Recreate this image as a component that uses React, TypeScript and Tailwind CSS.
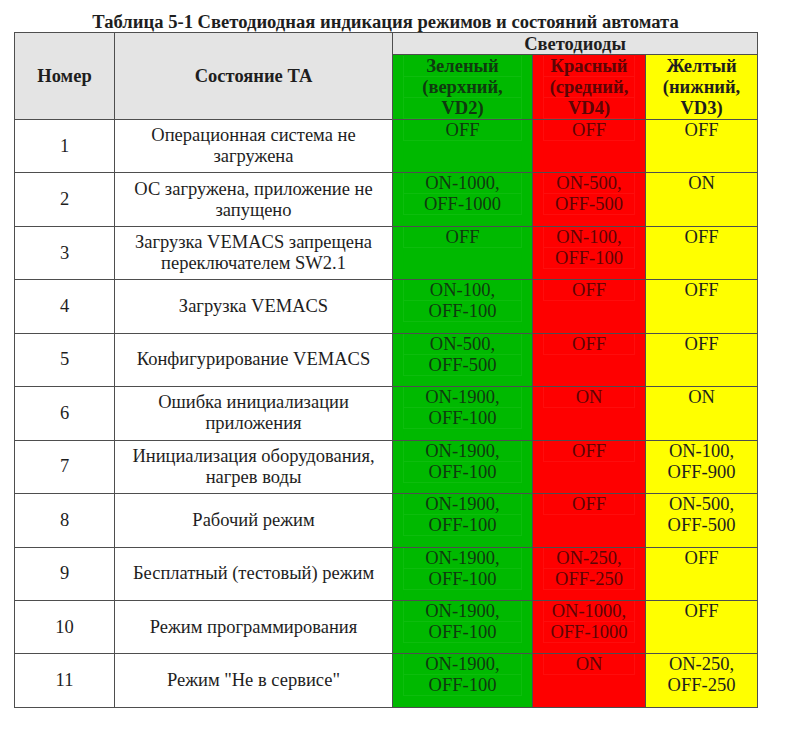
const rows: { n: string; state: string[]; g: string[]; r: string[]; y: string[] }[] = [
  { n: "1", state: ["Операционная система не", "загружена"], g: ["OFF"], r: ["OFF"], y: ["OFF"] },
  { n: "2", state: ["ОС загружена, приложение не", "запущено"], g: ["ON-1000,", "OFF-1000"], r: ["ON-500,", "OFF-500"], y: ["ON"] },
  { n: "3", state: ["Загрузка VEMACS запрещена", "переключателем SW2.1"], g: ["OFF"], r: ["ON-100,", "OFF-100"], y: ["OFF"] },
  { n: "4", state: ["Загрузка VEMACS"], g: ["ON-100,", "OFF-100"], r: ["OFF"], y: ["OFF"] },
  { n: "5", state: ["Конфигурирование VEMACS"], g: ["ON-500,", "OFF-500"], r: ["OFF"], y: ["OFF"] },
  { n: "6", state: ["Ошибка инициализации", "приложения"], g: ["ON-1900,", "OFF-100"], r: ["ON"], y: ["ON"] },
  { n: "7", state: ["Инициализация оборудования,", "нагрев воды"], g: ["ON-1900,", "OFF-100"], r: ["OFF"], y: ["ON-100,", "OFF-900"] },
  { n: "8", state: ["Рабочий режим"], g: ["ON-1900,", "OFF-100"], r: ["OFF"], y: ["ON-500,", "OFF-500"] },
  { n: "9", state: ["Бесплатный (тестовый) режим"], g: ["ON-1900,", "OFF-100"], r: ["ON-250,", "OFF-250"], y: ["OFF"] },
  { n: "10", state: ["Режим программирования"], g: ["ON-1900,", "OFF-100"], r: ["ON-1000,", "OFF-1000"], y: ["OFF"] },
  { n: "11", state: ['Режим "Не в сервисе"'], g: ["ON-1900,", "OFF-100"], r: ["ON"], y: ["ON-250,", "OFF-250"] },
]

// faint inner boxes around each line, as in the scanned original
function Lines({ lines, boxed }: { lines: string[]; boxed?: boolean }) {
  return (
    <div className={boxed ? "mx-[10px] border-x border-white/[0.05]" : ""}>
      {lines.map((l, i) => (
        <div key={i} className={boxed ? "border-b border-white/[0.05] leading-[20px]" : ""}>
          {l}
        </div>
      ))}
    </div>
  )
}

export default function App() {
  const cell = "border border-[#4e4e4e]"
  return (
    <div className="w-[807px] h-[742px] bg-white pt-[11px] font-[family-name:Liberation_Serif,serif] text-[#1e1e1e]">
      <div className="w-[743px] ml-[14px] text-center font-bold text-[18.6px] leading-[21px]">
        Таблица 5-1 Светодиодная индикация режимов и состояний автомата
      </div>
      <table className="ml-[14px] w-[743px] table-fixed border-collapse text-[18.5px] leading-[21px]">
        <colgroup>
          <col className="w-[100px]" />
          <col className="w-[278px]" />
          <col className="w-[140px]" />
          <col className="w-[113px]" />
          <col className="w-[112px]" />
        </colgroup>
        <thead>
          <tr className="h-[22px] font-bold">
            <th rowSpan={2} className={`${cell} bg-[#e4e4e4] align-middle`}>Номер</th>
            <th rowSpan={2} className={`${cell} bg-[#e4e4e4] align-middle`}>Состояние ТА</th>
            <th colSpan={3} className={`${cell} bg-[#e4e4e4] leading-[20px]`}>Светодиоды</th>
          </tr>
          <tr className="h-[65px] font-bold">
            <th className={`${cell} bg-[#00b900] text-[#0f3a0f] align-top pt-[1px]`}>
              <Lines boxed lines={["Зеленый", "(верхний,", "VD2)"]} />
            </th>
            <th className={`${cell} bg-[#fe0000] text-[#5c0505] align-top pt-[1px]`}>
              <Lines boxed lines={["Красный", "(средний,", "VD4)"]} />
            </th>
            <th className={`${cell} bg-[#ffff00] text-[#1e1e1e] align-top pt-[1px]`}>
              <Lines lines={["Желтый", "(нижний,", "VD3)"]} />
            </th>
          </tr>
        </thead>
        <tbody>
          {rows.map((r) => (
            <tr key={r.n} className="h-[53.45px]">
              <td className={`${cell} text-center align-middle`}>{r.n}</td>
              <td className={`${cell} text-center align-middle`}>
                <Lines lines={r.state} />
              </td>
              <td className={`${cell} bg-[#00b900] text-[#0f3a0f] text-center align-top`}>
                <Lines boxed lines={r.g} />
              </td>
              <td className={`${cell} bg-[#fe0000] text-[#5c0505] text-center align-top`}>
                <Lines boxed lines={r.r} />
              </td>
              <td className={`${cell} bg-[#ffff00] text-[#1e1e1e] text-center align-top`}>
                <Lines lines={r.y} />
              </td>
            </tr>
          ))}
        </tbody>
      </table>
    </div>
  )
}
